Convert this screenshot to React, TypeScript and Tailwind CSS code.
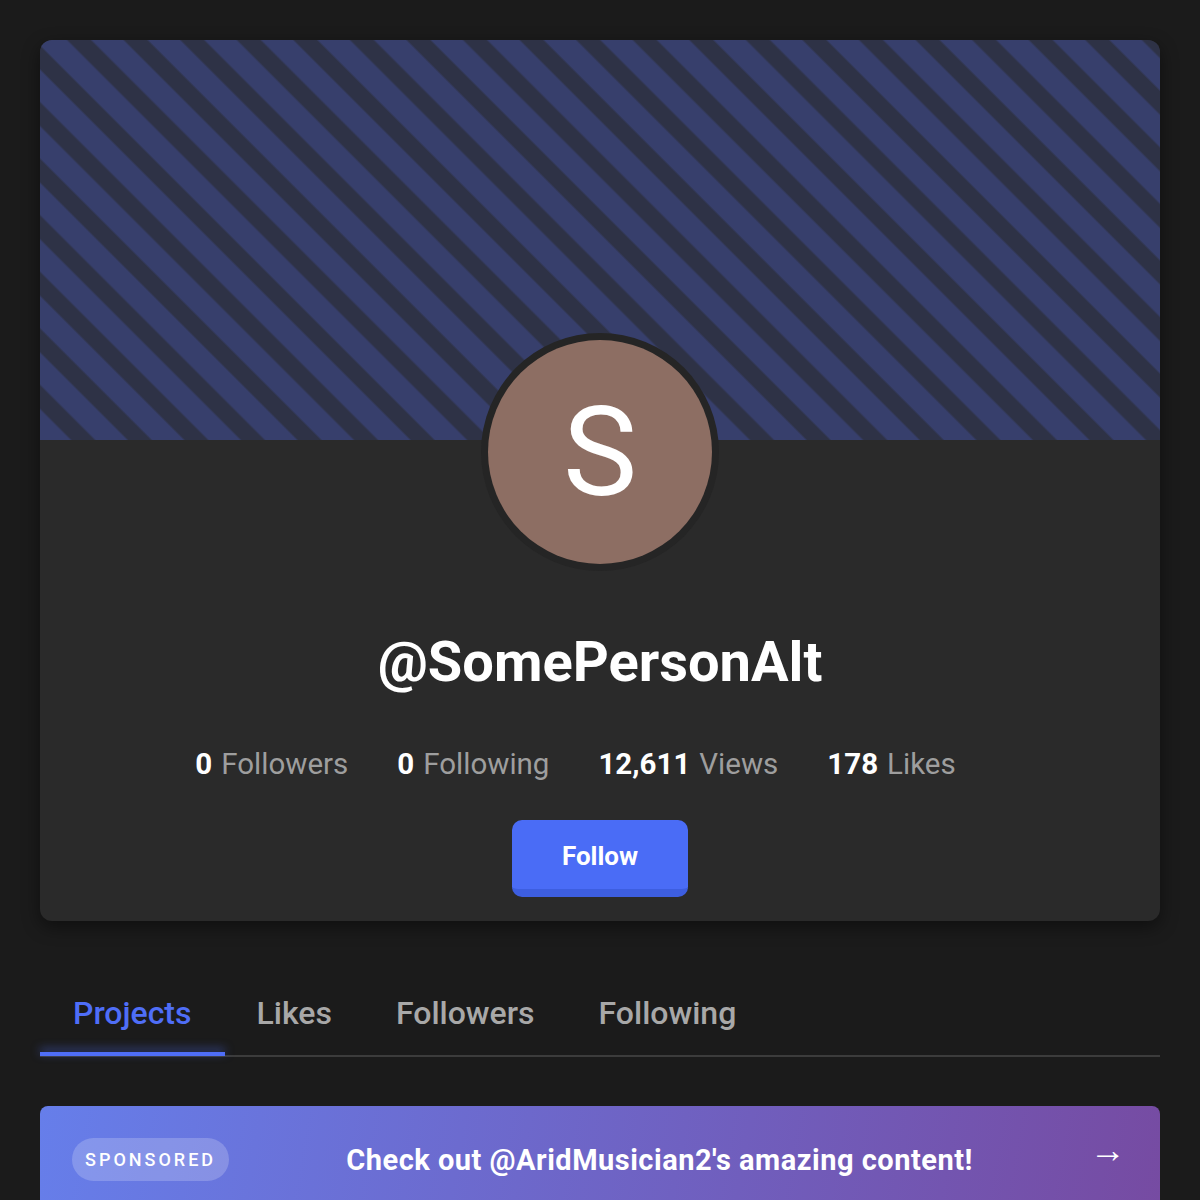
import React from "react";

export default function App() {
  const stats = [
    { n: "0", l: "Followers" },
    { n: "0", l: "Following" },
    { n: "12,611", l: "Views" },
    { n: "178", l: "Likes" },
  ];
  const tabs = ["Projects", "Likes", "Followers", "Following"];
  return (
    <div
      className="min-h-[1200px] w-full bg-[#1b1b1b] p-10"
      style={{ fontFamily: "Roboto, 'Liberation Sans', sans-serif" }}
    >
      <div className="overflow-hidden rounded-xl bg-[#2a2a2a] shadow-[0_6px_18px_rgba(0,0,0,0.45)]">
        <div className="h-[400px] w-full bg-[repeating-linear-gradient(45deg,#373f6c_0px,#373f6c_21px,#2e3246_23px,#2e3246_38px,#373f6c_40px)]" />
        <div className="flex flex-col items-center pb-6">
          <div className="relative -mt-[107px] flex h-[238px] w-[238px] items-center justify-center rounded-full bg-[#252525]">
            <div className="flex h-[224px] w-[224px] items-center justify-center rounded-full bg-[#8d6e63]">
              <span className="text-[125px] font-normal leading-none text-white">S</span>
            </div>
          </div>
          <h1 className="mt-[60px] text-[56px] font-bold leading-[62px] text-white">@SomePersonAlt</h1>
          <div className="mt-[53px] flex items-center text-[29.5px] leading-[36px]">
            {stats.map((s) => (
              <div key={s.l} className="mr-[49px] flex items-baseline gap-[9px]">
                <span className="font-bold text-white">{s.n}</span>
                <span className="text-[#9e9e9e]">{s.l}</span>
              </div>
            ))}
          </div>
          <button className="mt-[38px] flex h-[77px] w-[176px] items-center justify-center rounded-[10px] border-b-[8px] border-[#3d5ee0] bg-[#4a6cf6] pt-[4px] text-[26px] font-bold text-white">
            Follow
          </button>
        </div>
      </div>

      <div className="mt-[53px] flex border-b-2 border-[#3c3c3c]">
        {tabs.map((t, i) => (
          <div
            key={t}
            className={
              i === 0
                ? "relative px-[33px] pb-[23px] pt-[20px] text-[32px] font-medium leading-[38px] text-[#4f6ef7]"
                : "relative px-[32px] pb-[23px] pt-[20px] text-[32px] font-medium leading-[38px] text-[#a8a8a8]"
            }
          >
            {t}
            {i === 0 && (
              <div className="absolute bottom-[-1px] left-0 right-0 h-[4px] bg-[#4f6ef7] shadow-[0_-3px_10px_rgba(79,110,247,0.6)]" />
            )}
          </div>
        ))}
      </div>

      <div className="mt-[49px] flex h-[107px] items-center rounded-t-lg bg-[linear-gradient(100deg,#667eea_0%,#764ba2_100%)] px-8">
        <div className="flex h-[43px] items-center rounded-full bg-white/20 px-[13px] text-[18px] font-medium tracking-[3px] text-white">
          SPONSORED
        </div>
        <div className="flex-1 pt-[2px] text-center text-[29px] font-bold tracking-[0.5px] text-white">
          Check out @AridMusician2's amazing content!
        </div>
        <div className="mb-[20px] pr-[2px] text-[36px] font-bold leading-none text-white">→</div>
      </div>
    </div>
  );
}
